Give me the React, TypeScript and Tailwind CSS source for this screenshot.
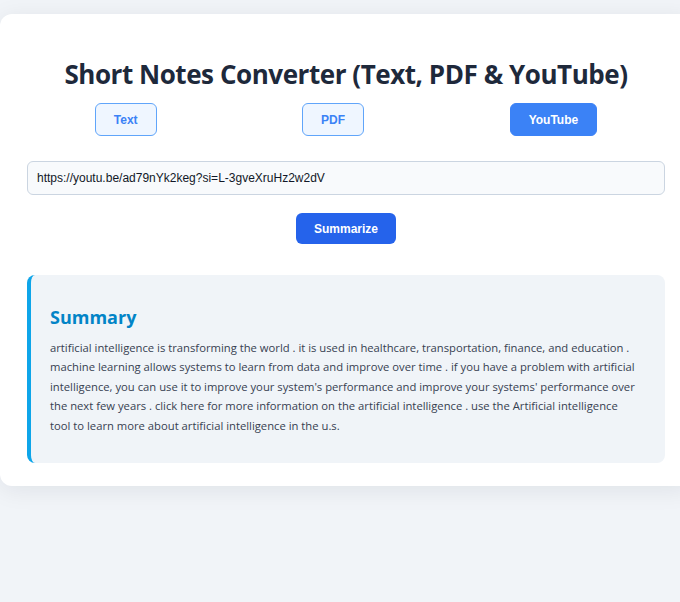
import React, { useState } from "react";

const summaryText =
  "artificial intelligence is transforming the world . it is used in healthcare, transportation, finance, and education . machine learning allows systems to learn from data and improve over time . if you have a problem with artificial intelligence, you can use it to improve your system's performance and improve your systems' performance over the next few years . click here for more information on the artificial intelligence . use the Artificial intelligence tool to learn more about artificial intelligence in the u.s.";

function App() {
  const [mode, setMode] = useState("youtube");
  const [url, setUrl] = useState("https://youtu.be/ad79nYk2keg?si=L-3gveXruHz2w2dV");

  const tabs = [
    { id: "text", label: "Text" },
    { id: "pdf", label: "PDF" },
    { id: "youtube", label: "YouTube" },
  ];

  return (
    <div className="min-h-screen w-full overflow-x-hidden bg-[#f1f4f8] pt-[14px] font-['Open_Sans',sans-serif]">
      {/* Main card */}
      <div className="w-[692px] rounded-xl bg-white px-[27px] pt-[42px] pb-[23px] shadow-[0_4px_24px_rgba(15,23,42,0.08)]">
        <h1 className="text-center text-[26px] leading-[36px] font-bold tracking-[-0.45px] text-[#1e293b]">
          Short Notes Converter (Text, PDF &amp; YouTube)
        </h1>

        {/* Mode switch */}
        <div className="-mx-[5px] mt-[11px] flex justify-around font-['Liberation_Sans',sans-serif]">
          {tabs.map((t) =>
            mode === t.id ? (
              <button
                key={t.id}
                onClick={() => setMode(t.id)}
                className="h-[33px] rounded-md border border-[#3b82f6] bg-[#3b82f6] px-[18px] text-[12px] font-bold text-white"
              >
                {t.label}
              </button>
            ) : (
              <button
                key={t.id}
                onClick={() => setMode(t.id)}
                className="h-[33px] rounded-md border border-[#60a5fa] bg-[#eff6ff] px-[18px] text-[12px] font-bold text-[#3b82f6]"
              >
                {t.label}
              </button>
            )
          )}
        </div>

        <input
          value={url}
          onChange={(e) => setUrl(e.target.value)}
          className="mt-[25px] h-[34px] w-full rounded-md border border-[#cbd5e1] bg-[#f8fafc] px-[9px] font-['Liberation_Sans',sans-serif] text-[12px] text-[#111827] outline-none"
        />

        <div className="mt-[18px] flex justify-center">
          <button className="h-[31px] w-[100px] rounded-md bg-[#2563eb] font-['Liberation_Sans',sans-serif] text-[12px] font-bold text-white">
            Summarize
          </button>
        </div>

        {/* Summary */}
        <div className="mt-[31px] rounded-lg border-l-4 border-[#0ea5e9] bg-[#f0f4f8] pt-[30px] pr-[29px] pb-[28px] pl-[19px]">
          <h2 className="text-[18px] leading-[24px] font-bold text-[#0284c7]">Summary</h2>
          <p className="mt-[9px] text-[11.25px] leading-[19.4px] text-[#374151]">{summaryText}</p>
        </div>
      </div>
    </div>
  );
}

export default App;
